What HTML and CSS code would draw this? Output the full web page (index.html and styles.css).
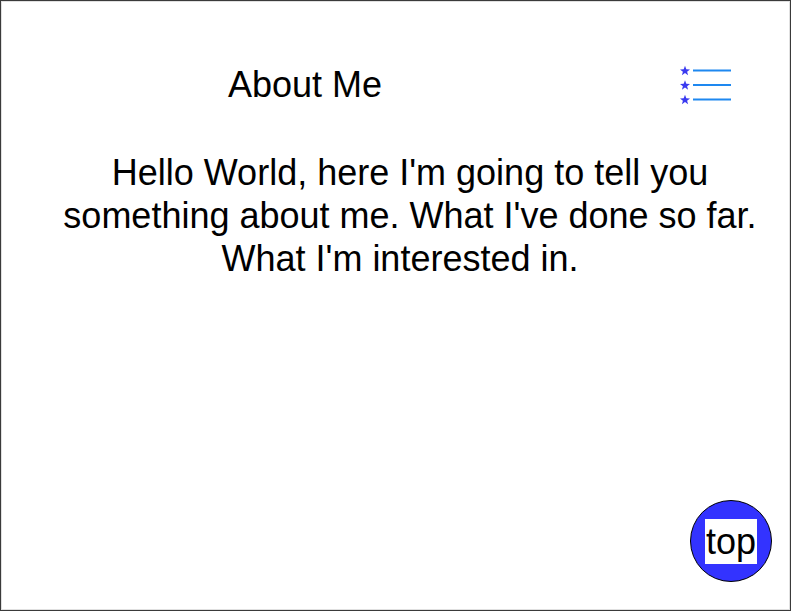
FILE: index.html
```html
<!DOCTYPE html>
<html lang="en">
<head>
<meta charset="utf-8">
<title>About Me</title>
<link rel="stylesheet" href="styles.css">
</head>
<body>
<div class="frame">
  <header class="header">
    <h1 class="title">About Me</h1>
    <button class="menu" aria-label="Menu">
      <svg width="56" height="46" viewBox="0 0 56 46">
        <defs>
          <polygon id="star" points="0,-5.2 1.3,-1.7 5,-1.6 2.1,0.7 3.1,4.2 0,2.1 -3.1,4.2 -2.1,0.7 -5,-1.6 -1.3,-1.7"/>
        </defs>
        <g fill="#3a3af0">
          <use href="#star" x="6" y="8"/>
          <use href="#star" x="6" y="22.5"/>
          <use href="#star" x="6" y="37"/>
        </g>
        <g stroke="#1e88f0" stroke-width="2">
          <line x1="14" y1="7.5" x2="52" y2="7.5"/>
          <line x1="14" y1="22" x2="52" y2="22"/>
          <line x1="14" y1="36.5" x2="52" y2="36.5"/>
        </g>
      </svg>
    </button>
  </header>
  <p class="intro">
    <span class="line">Hello World, here I'm going to tell you</span>
    <span class="line">something about me. What I've done so far.</span>
    <span class="line last">What I'm interested in.</span>
  </p>
  <a class="top-btn" href="#"><span class="top-label">top</span></a>
</div>
</body>
</html>
```

FILE: styles.css
```css
* { box-sizing: border-box; }
html, body {
  margin: 0;
  padding: 0;
  background: #fff;
}
body {
  font-family: "Liberation Sans", Arial, sans-serif;
  color: #000;
}
.frame {
  position: relative;
  width: 791px;
  height: 611px;
  border: 1px solid #3a3a3a;
  box-shadow: inset 0 0 0 1px rgba(0,0,0,0.12);
  overflow: hidden;
}
.header {
  display: flex;
  align-items: flex-start;
  padding: 63px 0 0 227px;
}
.title {
  margin: 0;
  font-weight: normal;
  font-size: 36px;
  line-height: 41px;
}
.menu {
  margin: 0 0 0 297px;
  padding: 0;
  border: 0;
  background: none;
  display: block;
  width: 56px;
  height: 46px;
  position: relative;
  top: -1px;
}
.menu svg { display: block; }
.intro {
  margin: 41px 0 0 0;
  padding: 0 0 0 29px;
  font-size: 36px;
  line-height: 43px;
  text-align: center;
}
.line { display: block; }
.line.last { padding-right: 20px; }
.top-btn {
  position: absolute;
  left: 689px;
  top: 499px;
  width: 82px;
  height: 82px;
  border-radius: 50%;
  background: #3333ff;
  border: 1px solid #000;
  display: flex;
  align-items: center;
  justify-content: center;
  text-decoration: none;
}
.top-label {
  background: #fff;
  color: #000;
  font-size: 36px;
  line-height: 45px;
  padding: 0 1px;
}
```
